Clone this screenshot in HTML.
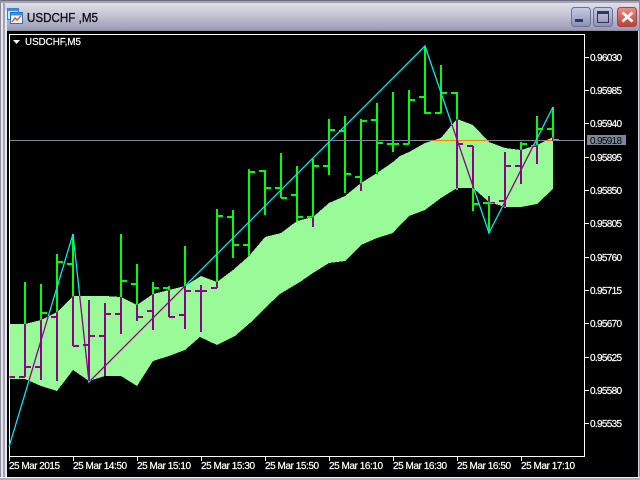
<!DOCTYPE html>
<html><head><meta charset="utf-8"><style>
html,body{margin:0;padding:0;background:#d4d4e0;overflow:hidden}
body{width:640px;height:480px;position:relative}
svg{position:absolute;left:0;top:0}
text{font-family:"Liberation Sans",sans-serif}
</style></head><body>
<svg width="640" height="480" viewBox="0 0 640 480" xmlns="http://www.w3.org/2000/svg">
<defs>
<linearGradient id="tb" x1="0" y1="0" x2="0" y2="1"><stop offset="0" stop-color="#e6e6ee"/><stop offset="0.45" stop-color="#c8c8d8"/><stop offset="1" stop-color="#9a9ab4"/></linearGradient>
<linearGradient id="btn" x1="0" y1="0" x2="0" y2="1"><stop offset="0" stop-color="#c8cce2"/><stop offset="1" stop-color="#8a90b4"/></linearGradient>
<linearGradient id="cls" x1="0" y1="0" x2="0" y2="1"><stop offset="0" stop-color="#e89088"/><stop offset="1" stop-color="#c03c34"/></linearGradient>
<polygon id="cloudp" points="10,324 25,324 41,320 57,312 73,296 89,296 105,296 121,297 137,305 153,294 169,290 185,286 201,276 217,282 233,270 249,256 265,237 281,233 297,221 313,217 329,203 345,196 361,183 377,173 393,162 400,156 409,152 425,143 441,138 450,127 457,119 473,125 489,142 505,148 521,150 537,145 553,137 553,189 537,204 521,207 505,207 489,202 473,188 457,188 441,198 425,210 409,216 400,225 393,233 377,238 361,245 345,261 329,263 313,273 300,282 280,294 265,308 250,323 235,336 217,345 200,337 185,350 169,356 153,361 137,386 121,376 105,376 89,381 73,370 57,391 41,386 25,379 10,379"/>
<clipPath id="inC"><use href="#cloudp"/></clipPath>
<path id="bars" fill="none" d="M9 377H15
M25 282V377M19 377H25M25 367H31
M41 284V380M35 367H41M41 313H47
M57 254V381M51 317H57M57 262H63
M73 234V346M67 264H73M73 346H79
M89 300V382M83 345H89M89 336H95
M105 303V376M99 336H105M105 314H111
M121 234V334M115 314H121M121 281H127
M137 264V321M131 284H137M137 317H143
M153 282V330M147 311H153M153 288H159
M169 286V317M163 288H169M169 317H175
M185 246V329M179 315H185M185 291H191
M201 285V332M195 291H201M201 291H207
M217 209V288M211 288H217M217 216H223
M233 210V258M227 217H233M233 245H239
M249 169V256M243 245H249M249 172H255
M265 170V215M259 171H265M265 188H271
M281 153V198M275 188H281M281 198H287
M297 166V221M291 195H297M297 217H303
M313 159V227M307 217H313M313 166H319
M329 119V175M323 166H329M329 130H335
M345 116V193M339 131H345M345 174H351
M361 119V191M355 177H361M361 121H367
M377 103V174M371 120H377M377 143H383
M393 92V152M387 144H393M393 144H399
M409 90V144M403 144H409M409 100H415
M425 46V114M419 97H425M425 113H431
M441 65V113M435 113H441M441 93H447
M457 92V190M451 93H457M457 144H463
M473 146V211M467 146H473M473 204H479
M489 196V233M483 203H489M489 203H495
M505 152V208M499 201H505M505 166H511
M521 142V184M515 166H521M521 144H527
M537 116V164M531 146H537M537 129H543
M553 107V141M547 129H553M553 140H559"/>
<path id="zig" fill="none" d="M9 447L73 234L89 382L425 46L489 233L553 107"/>
</defs>

<!-- window frame -->
<rect width="640" height="480" fill="#d4d4e0"/>
<rect x="0" y="0" width="640" height="30" fill="url(#tb)"/>
<rect x="0" y="0" width="640" height="1" fill="#6c6c7c"/>
<rect x="0" y="1" width="640" height="2" fill="#a4a4b2"/>
<rect x="0" y="30" width="640" height="1" fill="#8c8ca0"/>
<rect x="0" y="0" width="1" height="480" fill="#8c8c98"/>
<rect x="1" y="3" width="2" height="477" fill="#e4e4ec"/>
<rect x="3" y="3" width="2" height="477" fill="#a4a4b4"/>
<rect x="5" y="10" width="2" height="470" fill="#e8e8f0"/>
<rect x="639" y="0" width="1" height="480" fill="#8c8c98"/>
<rect x="0" y="477" width="640" height="1" fill="#f0f0f4"/>
<rect x="0" y="478" width="640" height="2" fill="#b0b0bc"/>

<!-- title icon -->
<rect x="7.5" y="8.5" width="11" height="11" fill="#c8e4fa" stroke="#3a80d0"/>
<rect x="8" y="9" width="10" height="2" fill="#3a90e0"/>
<rect x="10.5" y="12.5" width="12" height="11" fill="#f4f8ff" stroke="#2a70c8"/>
<rect x="11" y="13" width="11" height="2.5" fill="#3a90e8"/>
<path d="M12 22L15 18L17 20L21 16" stroke="#e85020" stroke-width="1.4" fill="none"/>
<text x="27" y="22" font-size="13" fill="#101018" stroke="#101018" stroke-width=".35" textLength="71" lengthAdjust="spacingAndGlyphs">USDCHF ,M5</text>

<!-- buttons -->
<rect x="571.5" y="7.5" width="19" height="19" rx="3" fill="url(#btn)" stroke="#6c7094"/>
<rect x="575" y="19" width="8" height="3" fill="#34345c"/>
<rect x="593.5" y="7.5" width="19" height="19" rx="3" fill="url(#btn)" stroke="#6c7094"/>
<rect x="597.5" y="11.5" width="11" height="11" fill="none" stroke="#34345c"/>
<rect x="597" y="11" width="12" height="3" fill="#34345c"/>
<rect x="617.5" y="7.5" width="19" height="19" rx="3" fill="url(#cls)" stroke="#a04848"/>
<path d="M622.5 12.5L632.5 21.5M632.5 12.5L622.5 21.5" stroke="#fff" stroke-width="2.6" fill="none"/>

<!-- client -->
<rect x="7" y="31" width="631" height="446" fill="#000"/>
<rect x="9.5" y="34.5" width="575" height="422" fill="none" stroke="#fff" stroke-width="1" shape-rendering="crispEdges"/>

<!-- green bars, cloud, purple overlay -->
<use href="#bars" stroke="#00ff00" stroke-width="2"/>
<use href="#zig" stroke="#00e8f0" stroke-width="1.3"/>
<rect x="10" y="140" width="574" height="1" fill="#778899"/>
<use href="#cloudp" fill="#98fb98" shape-rendering="crispEdges"/>
<g clip-path="url(#inC)">
<rect x="10" y="140" width="574" height="1" fill="#ff7f00"/>
<use href="#bars" stroke="#8b008b" stroke-width="2"/>
<use href="#zig" stroke="#8b008b" stroke-width="1.3"/>
</g>

<!-- chart label -->
<path d="M13 40H20L16.5 44Z" fill="#fff"/>
<g fill="#fff" stroke="#fff" stroke-width=".2" font-size="10">
<text x="25" y="45" textLength="56" lengthAdjust="spacingAndGlyphs">USDCHF,M5</text>
</g>

<!-- y axis -->
<path d="M585 57.5h4M585 90.5h4M585 123.5h4M585 157.5h4M585 190.5h4M585 223.5h4M585 257.5h4M585 290.5h4M585 323.5h4M585 357.5h4M585 390.5h4M585 423.5h4" stroke="#fff" fill="none" shape-rendering="crispEdges"/>
<g fill="#fff" stroke="#fff" stroke-width=".2" font-size="10">
<text x="590" y="61" textLength="32">0.96030</text>
<text x="590" y="94" textLength="32">0.95985</text>
<text x="590" y="127" textLength="32">0.95940</text>
<text x="590" y="161" textLength="32">0.95895</text>
<text x="590" y="194" textLength="32">0.95850</text>
<text x="590" y="227" textLength="32">0.95805</text>
<text x="590" y="261" textLength="32">0.95760</text>
<text x="590" y="294" textLength="32">0.95715</text>
<text x="590" y="327" textLength="32">0.95670</text>
<text x="590" y="361" textLength="32">0.95625</text>
<text x="590" y="394" textLength="32">0.95580</text>
<text x="590" y="427" textLength="32">0.95535</text>
</g>
<rect x="587" y="135" width="39" height="10" fill="#778899"/>
<text x="590" y="144" font-size="10" fill="#000" textLength="32">0.95918</text>

<!-- x axis -->
<path d="M9.5 457v4M73.5 457v4M137.5 457v4M201.5 457v4M265.5 457v4M329.5 457v4M393.5 457v4M457.5 457v4M521.5 457v4" stroke="#fff" fill="none" shape-rendering="crispEdges"/>
<g fill="#fff" stroke="#fff" stroke-width=".2" font-size="10">
<text x="9" y="469" textLength="51">25 Mar 2015</text>
<text x="73" y="469" textLength="54">25 Mar 14:50</text>
<text x="137" y="469" textLength="54">25 Mar 15:10</text>
<text x="201" y="469" textLength="54">25 Mar 15:30</text>
<text x="265" y="469" textLength="54">25 Mar 15:50</text>
<text x="329" y="469" textLength="54">25 Mar 16:10</text>
<text x="393" y="469" textLength="54">25 Mar 16:30</text>
<text x="457" y="469" textLength="54">25 Mar 16:50</text>
<text x="521" y="469" textLength="54">25 Mar 17:10</text>
</g>
</svg>
</body></html>
